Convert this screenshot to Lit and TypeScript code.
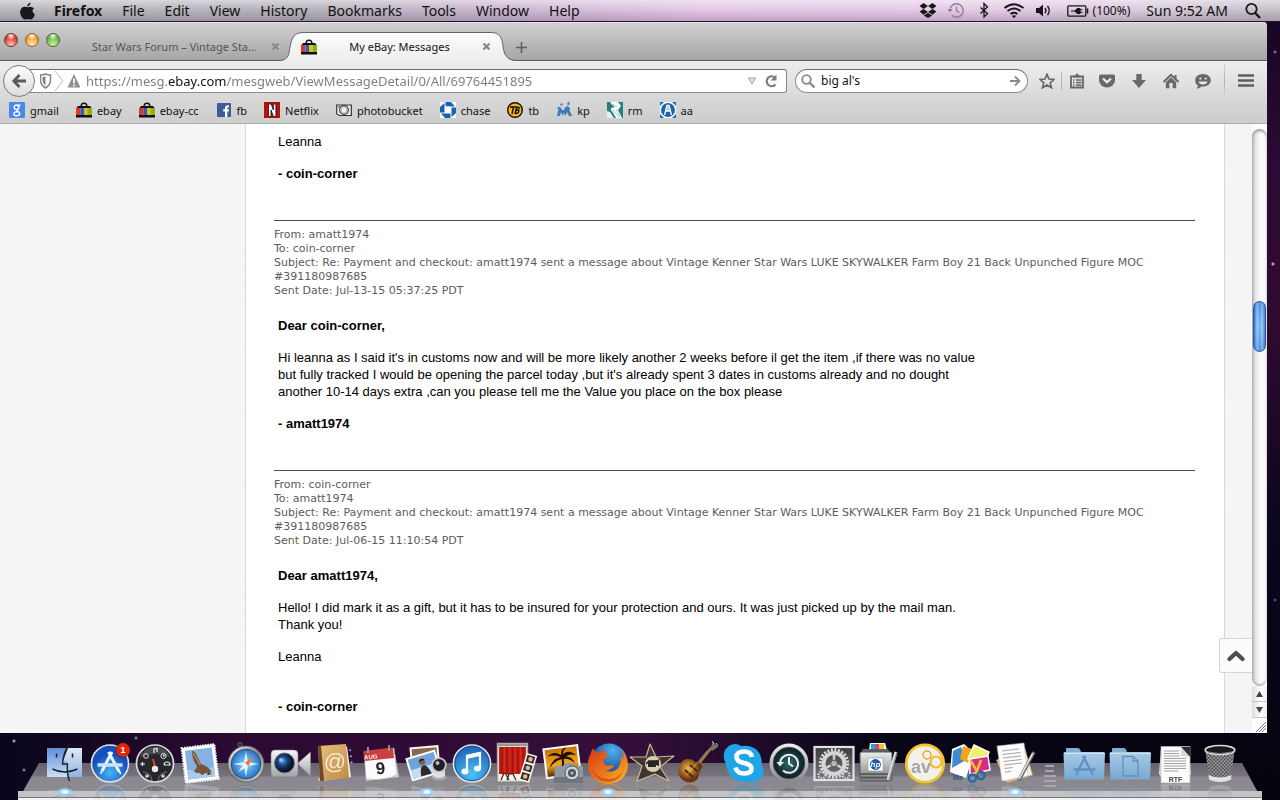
import { LitElement, html, css, svg, nothing } from "lit";
import { customElement, property, state } from "lit/decorators.js";
import { classMap } from "lit/directives/class-map.js";

/* ---------- small glyphs ---------- */

const bag = svg`<path d="M5 5C5 0 11 0 11 5" fill="none" stroke="#111" stroke-width="1.4"/>
  <path d="M2 4h12l1.500 2H.5z" fill="#111"/><path d="M0 6h4.500v7H0z" fill="#e2342a"/><path d="M4.500 6H8v7H4.500z" fill="#1b62d6"/>
  <path d="M8 6h3.500v7H8z" fill="#f3b50c"/><path d="M11.500 6H16v7h-4.500z" fill="#86b414"/><path d="M0 13h16v2.500H0z" fill="#111"/>`;

const favicons: Record<string, unknown> = {
  gmail: svg`<rect width="16" height="16" rx="1" fill="#4a87ee"/><circle cx="7.500" cy="5.300" r="2.300" fill="none" stroke="#fff" stroke-width="1.500"/>
    <path d="M9 3.200h2.500M8 7.700c-1.500 1 2.800 1.500 2.800 3.800 0 3-6 3-6 .4 0-1.800 2-2.300 4-2" fill="none" stroke="#fff" stroke-width="1.400"/>`,
  bag,
  fb: svg`<rect x="1" y="1" width="14" height="14" fill="#3f5c9a"/><path d="M9 15V9.500H7.200V7.300H9V5.800C9 3.800 10.200 3 13 3.200v2c-1.300 0-1.700.1-1.700 1v1.100H13l-.2 2.200h-1.500V15z" fill="#fff"/>`,
  netflix: svg`<rect width="16" height="16" fill="#b5120f"/><path d="M4.500 2h2.600l2.300 6V2h2.500v12.500H9.500L7 8v6.500H4.500z" fill="#fff" stroke="#111" stroke-width=".8"/>`,
  photo: svg`<path d="M.7 3h14.600v10.500H3.500L.7 12z" fill="#eee" stroke="#333" stroke-width="1.200"/><circle cx="8" cy="8" r="4.300" fill="#f6f6f6" stroke="#333" stroke-width="1.200"/><circle cx="8" cy="8" r="2.800" fill="none" stroke="#bbb"/><path d="M2 5h2" stroke="#333"/>`,
  chase: svg`<rect width="16" height="16" fill="#fff"/><path d="M5.500 0H11l4 4.500h-5.500v-.2L5.500 4.200zM16 5.500V11l-4.500 4v-9.500zM10.500 16H5l-4-4.500h9.500zM0 10.500V5l4.500-4v9.500z" fill="#1763b0"/>`,
  tb: svg`<circle cx="8" cy="8" r="7.300" fill="#f7b21c" stroke="#111" stroke-width="1.400"/><path d="M3 5h6M6.500 5 5 12M9.800 4.500 8 12M9 8.500c4-2 4 3-1 3M10 5.300c3-.5 3 2-.5 3" fill="none" stroke="#111" stroke-width="1.400"/>`,
  kp: svg`<path d="M1 14 2.500 7 1 6l1.500-1.500L5 6l1 2h2l1-2.500L11.500 4 14 6l-.5 2L16 14h-3l-2-4-1.500 4L8 11l-1.500 3L5 10l-1 4zM4.500 1.500h2v2h-2zM11.500 0h2v3h-2z" fill="#3f7cba"/>`,
  rm: svg`<rect width="16" height="16" fill="#24807b"/><path d="M3 0h8l3 4-3 4 4 8H9L5 9H4V6l4-1-3-2z" fill="#fff"/><path d="M6 8l6 7M9 7l4 8M5 2l5 3" stroke="#8fb8b5" stroke-width=".8"/><path d="M0 9l3 1 4 6H0z" fill="#e6eeee"/>`,
  aa: svg`<rect width="16" height="16" fill="#fff"/><path d="M0 0h4L0 4zM16 0h-4l4 4zM0 16h4l-4-4zM16 16h-4l4-4z" fill="#2a6fae"/><circle cx="8" cy="8" r="7" fill="#1d66ad"/><path d="M4.500 13 7 3.500h2L11.500 13M6 9h4M8 5v4" fill="none" stroke="#fff" stroke-width="1.300"/>`,
};

const tools: Record<string, unknown> = {
  star: svg`<path d="M8 1.200 10 6l5.200.4-4 3.400 1.300 5L8 12l-4.500 2.800 1.300-5-4-3.400L6 6z" fill="none" stroke="#666" stroke-width="1.600"/>`,
  list: svg`<path d="M2 3.500h12v11H2z" fill="none" stroke="#666" stroke-width="1.800"/><path d="M5 4.500V2.500h1.500L7 .8h2l.5 1.700H11v2z" fill="#666"/><path d="M4 7h1.500M7 7h5.500M4 9.500h1.500M7 9.500h5.500M4 12h1.500M7 12h5.500" stroke="#666" stroke-width="1.300"/>`,
  pocket: svg`<path d="M1.500 1.500h13q1.500 0 1.500 1.500v4a8 7.500 0 0 1-16 0V3q0-1.500 1.500-1.500z" fill="#696969"/><path d="M4 5.500 8 9.300l4-3.800" fill="none" stroke="#eee" stroke-width="2.200"/>`,
  down: svg`<path d="M5.300 1h5.400v6H15l-7 8-7-8h4.300z" fill="#696969"/>`,
  home: svg`<path d="M.5 9 8 1.800 15.500 9" fill="none" stroke="#666" stroke-width="2"/><path d="M11.500 2h2v4l-2-2zM2.800 9.200 8 4.300l5.200 4.900v6H9.700V10H6.300v5.200H2.800z" fill="#696969"/>`,
  chat: svg`<path d="M8 1c4.500 0 7.800 2.800 7.800 6.300S12.500 13.600 8 13.600l-1.500-.1C5 15 3 15.600 1.500 15.500c1-.8 1.400-1.800 1.300-2.900C1 11.500.2 9.600.2 7.300.2 3.800 3.500 1 8 1z" fill="#696969"/><circle cx="5.300" cy="5.500" r="1.100" fill="#eee"/><circle cx="10.700" cy="5.500" r="1.100" fill="#eee"/><path d="M3.500 8.500h9q-1 3-4.500 3t-4.500-3z" fill="#e6e6e6"/>`,
  menu: svg`<path d="M0 2.500h16M0 7.500h16M0 12.500h16" stroke="#5e5e5e" stroke-width="2.600"/>`,
};

const menuGlyphs: Record<string, unknown> = {
  dropbox: svg`<path d="M4.500 1 9 4 4.500 7 .5 4zM13.500 1 9 4l4.500 3 4-3zM.5 9.500 4.500 7 9 10l-4.500 2.800zM17.500 9.500 13.500 7 9 10l4.500 2.800zM4.800 13.600 9 11l4.200 2.600L9 16z" fill="#1b141d"/>`,
  time: svg`<path d="M3.200 6.200a6.700 6.700 0 1 1 1.600 7.100" fill="none" stroke="#8c7d90" stroke-width="1.400"/><path d="M9.500 4.500v4.300l3 1.700" fill="none" stroke="#8c7d90" stroke-width="1.300"/><path d="M.5 7h5.200L2.800 10.500z" fill="#8c7d90"/>`,
  bt: svg`<path d="m5.500 5.500 7 6-3.500 3.500V1.500L12.500 5l-7 6.500" fill="none" stroke="#1b141d" stroke-width="1.300"/>`,
  vol: svg`<path d="M1 6h3l4-3.500v12L4 11H1z" fill="#1b141d"/><path d="M10 6q1.800 2.500 0 5M12.500 4q3.500 4.500 0 9" fill="none" stroke="#1b141d" stroke-width="1.400"/>`,
  search: svg`<circle cx="7.500" cy="7" r="5.200" fill="none" stroke="#1b141d" stroke-width="1.800"/><path d="m11.300 11 4.700 5" stroke="#1b141d" stroke-width="2.400"/>`,
};

/* ---------- dock icons, drawn on a 40 × 40 grid ---------- */

interface DockItem { name: string; art: unknown; running?: boolean; badge?: string }

const folder = (mark: unknown) => svg`
  <defs><linearGradient id="fold" x2="0" y2="1"><stop stop-color="#a9cbe6"/><stop offset="1" stop-color="#78a9d2"/></linearGradient></defs>
  <path d="M2 9V6q0-1 1-1h11q1 0 2 1.500L17 9h23l-1 3H1z" fill="#82aed1"/><path d="M-.5 10.500q0-1.500 1.500-1.500h38.500q1.500 0 1.500 1.500L40 36.500H.5z" fill="url(#fold)"/>
  <path d="M0 10.500h41" stroke="#cfe3f3"/>${mark}`;

const dock: DockItem[] = [
  { name: "Finder", running: true, art: svg`
    <defs><linearGradient id="fl" x2="0" y2="1"><stop stop-color="#5f8fd8"/><stop offset="1" stop-color="#c9dff5"/></linearGradient>
    <linearGradient id="fr" x2="0" y2="1"><stop stop-color="#dfe9f5"/><stop offset="1" stop-color="#8fb4df"/></linearGradient></defs>
    <path d="M2 5h20l-4 12h4v17H2z" fill="url(#fl)"/><path d="M23 5h14v29H22V18h-4z" fill="url(#fr)"/>
    <path d="M24.500 1Q18 10 17.500 21h5q-1 9 2 17M7.500 26q12 6 25 0" fill="none" stroke="#15202e" stroke-width="1.400"/><path d="M11.500 10.500v4M27.500 10.500v4" stroke="#15202e" stroke-width="1.500"/>` },
  { name: "App Store", badge: "1", art: svg`
    <defs><radialGradient id="as" cy=".75"><stop stop-color="#46b4f4"/><stop offset="1" stop-color="#1450bd"/></radialGradient></defs>
    <circle cx="20" cy="20.500" r="18.500" fill="url(#as)" stroke="#dfe3e8" stroke-width="1.600"/>
    <path d="M22 9 12 28M18.500 9 29 28.500" stroke="#eef4fb" stroke-width="3"/><path d="M7.500 22h25" stroke="#cfe2f5" stroke-width="3.500"/><path d="m12 28-1.500 3M29 28l1.800 3" stroke="#fff" stroke-width="1.600"/>` },
  { name: "Dashboard", art: svg`
    <circle cx="20" cy="20.500" r="18.500" fill="#26272a" stroke="#d8d8dc" stroke-width="1.700"/><path d="M5 14a16 16 0 0 1 30 0q-15-6-30 0z" fill="#4a4b50"/>
    <path d="M8 29a9 9 0 0 1 9 9M32 29a9 9 0 0 0-9 9" fill="none" stroke="#77787c"/><circle cx="11" cy="13" r="2.300" fill="none" stroke="#ddd"/><circle cx="28.500" cy="13" r="2.600" fill="none" stroke="#ddd"/>
    <path d="M19 10V6l3-.6V9M5 21h5M7.500 19v4M29 22h6q0-3-3-3t-3 3M28.500 11.500V13h1.500" fill="none" stroke="#eee" stroke-width="1.200"/><path d="m18 16 2.500 10" stroke="#f0442f" stroke-width="1.800"/>
    <circle cx="20" cy="26" r="3.200" fill="#ececec"/><circle cx="12" cy="33" r="1.800" fill="#ddd"/><circle cx="28" cy="33" r="1.800" fill="#ddd"/><path d="m10 31 2 2M30 31l-2 2" stroke="#e44"/>` },
  { name: "Mail", art: svg`
    <g transform="rotate(-7 20 20)"><rect x="3.500" y="3" width="33" height="35" fill="#fff" stroke="#fff" stroke-width="2" stroke-dasharray="1.600 1"/><rect x="6.500" y="6" width="27" height="29" fill="#86b2e2"/><path d="M6.500 25q12 5 27 0v10h-27z" fill="#a9caec"/></g>
    <path d="M12 8q3 0 5 5l4 8q7 2 11 8l-6 1-4 2q-3-3-6-2l-2-2q3-3 3-5-5-6-5-15z" fill="#7a553a"/><path d="M13 10q4 6 7 12" stroke="#c8a683" fill="none"/><path d="m28 29 4 2-5 1z" fill="#433"/>` },
  { name: "Safari", art: svg`
    <defs><radialGradient id="sf"><stop stop-color="#8fd8fa"/><stop offset="1" stop-color="#2473c9"/></radialGradient><linearGradient id="sm" x2="1" y2="1"><stop stop-color="#fff"/><stop offset=".5" stop-color="#80858c"/><stop offset="1" stop-color="#d8dadd"/></linearGradient></defs>
    <circle cx="14" cy="1.500" r="2" fill="none" stroke="#777"/><circle cx="20" cy="21" r="18" fill="url(#sm)" stroke="#50545a" stroke-width=".8"/><circle cx="20" cy="21" r="14.800" fill="url(#sf)" stroke="#394b5e"/>
    <path d="m20 8 2 11 11 2-11 2-2 11-2-11-11-2 11-2z" fill="#d8f1fc"/><path d="m28 13-6 10-3-3z" fill="#e5482d"/><path d="m28 13-8.500 7.500L22 23z" fill="#f37a4c"/><path d="m12 29 7-9 3 3z" fill="#f5f8fa"/>` },
  { name: "FaceTime", art: svg`
    <defs><linearGradient id="ft" x2="0" y2="1"><stop stop-color="#f6f6f6"/><stop offset="1" stop-color="#a2a3a6"/></linearGradient><radialGradient id="fe" cx=".4" cy=".4"><stop stop-color="#5fa2e0"/><stop offset=".5" stop-color="#17407c"/><stop offset="1" stop-color="#0a1224"/></radialGradient></defs>
    <path d="M27 20 39.500 9v24L27 21z" fill="url(#ft)" stroke="#8d8e91" stroke-width=".5"/><rect x="0" y="7" width="27" height="27" rx="4" fill="url(#ft)" stroke="#818286" stroke-width=".6"/><circle cx="13.500" cy="20" r="10" fill="url(#fe)" stroke="#74777c"/><circle cx="10" cy="17" r="2" fill="#b8d8f5" opacity=".7"/>` },
  { name: "Address Book", art: svg`
    <defs><linearGradient id="ab" x2="1" y2="1"><stop stop-color="#e9c07c"/><stop offset="1" stop-color="#bd8943"/></linearGradient></defs>
    <path d="m31 3 4 31-30 4-3-1z" fill="#f2eee6"/><path d="M33 7l2 .5M34 13l2 .5M34.500 19l2 .5" stroke="#8cb3d8" stroke-width="1.600"/><path d="M2 3 30 1l3 34-29 3z" fill="url(#ab)"/><path d="m2 3 3-.3L8 37.700 4 38z" fill="#6b4a2c"/>
    <text x="19" y="26" text-anchor="middle" font-family="Liberation Sans, sans-serif" font-size="22" fill="#f6ead3">@</text>` },
  { name: "Calendar", art: svg`
    <path d="m6 14 28-3 4 23-33 4z" fill="#cfcfcf"/><path d="m3 9 30-4 3 27q-15 6-31 4z" fill="#fbfbfb" stroke="#aaa" stroke-width=".5"/><path d="m2.500 8 29.500-3.500 1 10.500L3.500 18z" fill="#c83f3c"/><path d="M7 4v6M28 2v6" stroke="#9a9a9a" stroke-width="1.800"/>
    <text x="10" y="16" text-anchor="middle" font-family="Liberation Sans, sans-serif" font-size="6" font-weight="bold" fill="#fff" transform="rotate(-5 10 16)">AUG</text>
    <text x="20" y="31" text-anchor="middle" font-family="Liberation Sans, sans-serif" font-size="17" font-weight="bold" fill="#222" transform="rotate(-5 20 31)">9</text>` },
  { name: "iPhoto", running: true, art: svg`
    <g transform="rotate(-5 20 10)"><rect x="3" y="3" width="29" height="20" fill="#fafafa"/><rect x="5" y="5" width="25" height="16" fill="#8a6a4a"/></g>
    <g transform="rotate(-17 18 22)"><rect x="1" y="10" width="31" height="24" fill="#fff"/><rect x="3" y="12" width="27" height="20" fill="#6ea3dc"/><path d="M3 23h27v9H3z" fill="#c7dcef"/><path d="M11 32q1-9 5-10t6 10z" fill="#2b2b2b"/><circle cx="16" cy="18" r="3.200" fill="#8a5b3b"/><path d="M12.800 17q3-4 6.400 0z" fill="#1c1514"/></g>
    <ellipse cx="32" cy="34" rx="7.500" ry="3.500" fill="#a9a9ad"/><path d="M26 27q6 5 12 0v6q-6 4-12 0z" fill="#dedfe1"/><circle cx="32" cy="22" r="6.800" fill="#1d1f22" stroke="#c5c7ca" stroke-width="1.800"/><circle cx="30.500" cy="20" r="2" fill="#b8bcc2"/>` },
  { name: "iTunes", art: svg`
    <defs><radialGradient id="it" cy=".8" r=".8"><stop stop-color="#4ec2f5"/><stop offset="1" stop-color="#1b5fb5"/></radialGradient></defs>
    <circle cx="20" cy="20.500" r="18.500" fill="url(#it)" stroke="#dfe5ea" stroke-width="1.700"/><circle cx="20" cy="20.500" r="17.200" fill="none" stroke="#123f7c" stroke-width=".8"/>
    <path d="M15 29V13l13-3v15.500" fill="none" stroke="#f5f9fc" stroke-width="2.200"/><path d="m14.500 12 14-3v4l-14 3z" fill="#f5f9fc"/><ellipse cx="13" cy="28.500" rx="3.600" ry="2.900" fill="#f5f9fc"/><ellipse cx="25.500" cy="25.500" rx="3.600" ry="2.900" fill="#f5f9fc"/>` },
  { name: "Photo Booth", art: svg`
    <defs><linearGradient id="pb" x2=".2" spreadMethod="repeat"><stop stop-color="#dd2a1c"/><stop offset=".5" stop-color="#a0120b"/><stop offset="1" stop-color="#dd2a1c"/></linearGradient></defs>
    <rect x="0" y="0" width="31" height="39" fill="#d8d8d6" stroke="#75716e" stroke-width=".8"/><rect x="2" y="4" width="27" height="27" fill="url(#pb)"/><path d="M1 2h29" stroke="#555"/><path d="M2 31h27v6H2z" fill="#f4f2ef"/><path d="m4 37 3-7M12 37l-4-7M10 31h6l3 6M10 37l2-6" stroke="#3b2018" stroke-width="1.200" fill="none"/>
    <g transform="rotate(17 31 26)"><rect x="25" y="11" width="11" height="28" fill="#f7f7f7"/><path d="M26.500 12.500h8v7h-8zM26.500 21.500h8v7h-8zM26.500 30.500h8v7h-8z" fill="#3a2a22"/><circle cx="30.500" cy="16" r="2.300" fill="#e1b595"/><circle cx="30.500" cy="25" r="2.300" fill="#e1b595"/><circle cx="30.500" cy="34" r="2.300" fill="#e1b595"/></g>` },
  { name: "Image Capture", art: svg`
    <defs><linearGradient id="ic" x2="0" y2="1"><stop stop-color="#c9720b"/><stop offset=".6" stop-color="#f2a51c"/><stop offset="1" stop-color="#5a2a08"/></linearGradient></defs>
    <g transform="rotate(-7 20 18)"><rect x="1" y="3" width="36" height="31" fill="#fdfdfd"/><rect x="3" y="5" width="32" height="27" fill="url(#ic)"/><path d="M19 12Q12 6 5 12q8-2 13 2-8 0-12 9 7-7 13-7 0 8-4 16h3q3-8 3-16 6 0 11 6-3-8-9-8 5-3 11 0-6-7-13-3 0-4 4-6-6 0-6 7z" fill="#1f1108"/></g>
    <path d="M12 23h8l2-3h7l2 3h9v17H11z" fill="#8f979f"/><path d="M11 34h29v6H11z" fill="#6f767d"/><circle cx="29" cy="30" r="7" fill="#cfd4d9" stroke="#555b61"/><circle cx="29" cy="30" r="4" fill="#4b5560"/><circle cx="29" cy="30" r="1.600" fill="#a7bfd8"/>` },
  { name: "Firefox", running: true, art: svg`
    <defs><radialGradient id="ff" cx=".6" cy=".2" r=".7"><stop stop-color="#4fb2ee"/><stop offset="1" stop-color="#123a86"/></radialGradient><linearGradient id="fx" x2="1" y2="1"><stop stop-color="#d9380f"/><stop offset=".6" stop-color="#ee7d1c"/><stop offset="1" stop-color="#fbc62a"/></linearGradient></defs>
    <circle cx="21" cy="19" r="18.500" fill="url(#ff)"/><path d="M3 9 5 5q2 5 6 5l5-4q0 4 4 6 0 3-5 4l1 5q3 3 7 1l3 1q-4 5-9 4 7 4 13-2 4-5 2-13l3 4q1-7-3-11 8 7 8 17a20 19 0 0 1-40 0q0-8 3-12z" fill="url(#fx)"/><path d="M4 25q5 12 18 11 11-1 15-12-5 15-17 15Q7 38 4 25z" fill="#c93b0d" opacity=".6"/>` },
  { name: "iMovie", art: svg`
    <path d="M17 1 23 14l18-1-14 11 9 14-14-7L4 38l5-15-12-9 16 0z" fill="#3b3633" stroke="#cdb795" stroke-width="1.200" stroke-linejoin="round"/><circle cx="20" cy="21" r="8" fill="#d8cfae"/><path d="M15 18h8l3-2v7l-3-1v2h-8z" fill="#2b2724"/><path d="m13 21 3-3h8" stroke="#222" stroke-width="1.500" fill="none"/>` },
  { name: "GarageBand", art: svg`
    <defs><radialGradient id="gb" cx=".4" cy=".4"><stop stop-color="#f0b54a"/><stop offset="1" stop-color="#6b3209"/></radialGradient></defs>
    <path d="m20 22 13-17" stroke="#a07a45" stroke-width="2.600"/><path d="m32 6 3-7 5 5-6 4z" fill="#77716a"/><path d="m34-2 2 3M38 0l2 3" stroke="#ccc"/><path d="M2 22q2-6 8-6 5 0 7 3l5 1q4 3 1 6l-2 4q0 7-6 9-8 2-13-5-3-6 0-12z" fill="url(#gb)"/><path d="m7 27 8 7M12 22l7 6" stroke="#3d2410" stroke-width="1.800"/><path d="m9 32 20-24" stroke="#f5e7c8" stroke-width=".5"/>` },
  { name: "Skype", art: svg`
    <path d="M11 1q4 0 6 2 21-2 21 20 3 5 1 10-5 8-14 6Q5 41 2 21-2 14 1 7 5 1 11 1z" fill="#1fa5e6"/>
    <path d="M28 14q-1-5.500-8-5.500-7.500 0-7.500 5.500 0 4.500 7.500 6t7.500 5.500q0 5-7.500 5-7 0-8.500-6" fill="none" stroke="#fff" stroke-width="4.600"/>` },
  { name: "Time Machine", art: svg`
    <defs><radialGradient id="tm"><stop stop-color="#2e6d6e"/><stop offset="1" stop-color="#0b1b22"/></radialGradient><linearGradient id="tr" x2="0" y2="1"><stop stop-color="#f0f0f0"/><stop offset="1" stop-color="#85878a"/></linearGradient></defs>
    <circle cx="20" cy="20" r="19.500" fill="url(#tr)"/><circle cx="20" cy="20" r="15.800" fill="url(#tm)" stroke="#4f5255"/><path d="M11 21a9 9 0 1 1 3 6.500M20 14v6.500l4 3" fill="none" stroke="#e9eded" stroke-width="2"/><path d="M7.500 19h7.500l-4 4.500z" fill="#e9eded"/>` },
  { name: "System Preferences", art: svg`
    <defs><linearGradient id="sp" x2="0" y2="1"><stop stop-color="#3b3c3e"/><stop offset="1" stop-color="#77797b"/></linearGradient></defs>
    <rect x=".5" y="4" width="39" height="33" fill="url(#sp)" stroke="#e1e2e3" stroke-width="2.200"/><circle cx="20" cy="20.500" r="13.700" fill="none" stroke="#dedfe0" stroke-width="3" stroke-dasharray="2 1.585"/><circle cx="20" cy="20.500" r="10.500" fill="none" stroke="#d5d6d7" stroke-width="4"/><path d="M20 20.500V10M20 20.500l-9 5M20 20.500l9 5" stroke="#cfd0d1" stroke-width="2.500"/><circle cx="20" cy="20.500" r="3.400" fill="#b6b7b8" stroke="#555"/><circle cx="8" cy="32" r="3.500" fill="none" stroke="#ccc" stroke-width="2.500" stroke-dasharray="1.600 1.100"/><circle cx="32" cy="32" r="3.500" fill="none" stroke="#ccc" stroke-width="2.500" stroke-dasharray="1.600 1.100"/>` },
  { name: "HP Utility", art: svg`
    <defs><linearGradient id="hp" x2="0" y2="1"><stop stop-color="#eceded"/><stop offset="1" stop-color="#77797c"/></linearGradient></defs>
    <path d="M11 0h15l2 7H10z" fill="#fff"/><path d="M12 1h4v5h-4z" fill="#22a7dd"/><path d="M16 1h4v5h-4z" fill="#e03a8c"/><path d="M20 1h5v5h-5z" fill="#f2c61e"/><path d="M4 6h25l3 6H1z" fill="#5d5f62"/><rect x="1" y="9" width="32" height="29" rx="1.500" fill="url(#hp)" stroke="#55575a"/><path d="M1 31h32M2 34.500h30" stroke="#4d4f52" stroke-width="1.500"/>
    <rect x="9" y="15" width="15" height="13" fill="#fff" stroke="#888" stroke-width=".5"/><circle cx="16.500" cy="21.500" r="5.400" fill="#1b5ea8"/><text x="16.500" y="24" text-anchor="middle" font-family="Liberation Sans, sans-serif" font-size="8" font-style="italic" font-weight="bold" fill="#fff">hp</text><path d="m37 9-8 28" stroke="#dfe0e2" stroke-width="3"/><path d="m38 9-8 28" stroke="#77797b"/>` },
  { name: "Avast", art: svg`
    <circle cx="20" cy="20.500" r="18.700" fill="#f3f1ec" stroke="#f4c42d" stroke-width="2.800"/><circle cx="22" cy="12" r="4" fill="none" stroke="#e9a72a" stroke-width="1.500"/><circle cx="31" cy="19" r="5.500" fill="none" stroke="#f0bb3c" stroke-width="2.200"/><path d="m25 14 2 2" stroke="#e9a72a"/>
    <text x="16" y="30" text-anchor="middle" font-family="Liberation Sans, sans-serif" font-size="18" font-weight="bold" fill="#a5a5a7">av</text>` },
  { name: "Photo Editor", art: svg`
    <path d="m2 6 12-5 10 9-8 25L0 29z" fill="#fff"/><path d="m3 8 8-4 5 13-14 8z" fill="#3f8bd3"/><path d="M13 3l9 3-4 14-8-4z" fill="#f5a31a"/><path d="m24 2 15 7-6 14-15-7z" fill="#eef06c" stroke="#fff" stroke-width="1.500"/><path d="m20 16 18-3 2 14-20 4z" fill="#dc2a8c" stroke="#fff" stroke-width="1.500"/>
    <path d="m21 18 8 14M31 17 25 33" stroke="#f0c21d" stroke-width="2.600"/><circle cx="22.500" cy="35" r="3.700" fill="none" stroke="#1f66b5" stroke-width="2.200"/><circle cx="31" cy="32.500" r="3.700" fill="none" stroke="#1f66b5" stroke-width="2.200"/>
    <text x="3" y="37" font-family="Liberation Sans, sans-serif" font-size="7" font-weight="bold" fill="#1d4c94">lite</text>` },
  { name: "TextEdit", running: true, art: svg`
    <path d="M1 17 30 5l8 27-26 8z" fill="#dcae5f"/><path d="M4 14 28 1l9 31-27 6z" fill="#efefef"/><path d="M2 3 29 0l4 33-26 5z" fill="#fcfcfc" stroke="#bbb" stroke-width=".6"/><path d="m7 8 17-2M7.500 11.500l18-2M8 15l18-2M8.500 18.500l18-2M9 22l18-2M9.500 25.500l8-1M10 29l6-.6" stroke="#999" stroke-width=".9"/><path d="M39 9 24 37" stroke="#5c5e60" stroke-width="3.600"/><path d="M38 10 24 36" stroke="#d5d6d8" stroke-width="2"/>` },
];

const dockRight: DockItem[] = [
  { name: "Applications", art: folder(svg`<path d="M21.500 13 12 32M19 13l10 19M9.500 26.500h22" fill="none" stroke="#5f93c2" stroke-width="2.300"/>`) },
  { name: "Documents", art: folder(svg`<path d="M13 13.500h10l5 4.500v15H13zM23 13.500V18h5" fill="none" stroke="#5f93c2" stroke-width="1.300"/>`) },
  { name: "Rich text file", art: svg`
    <path d="M6 5 34 7l2 24-4 6H8L4 31z" fill="#dedede"/><path d="M6 3.500h29V40H6z" fill="#fbfbfb" stroke="#bbb" stroke-width=".7"/><path d="M9 8h15M9 10.500h15M9 13h16M9 15.500h22M9 18h22M9 20.500h22M9 23h22M9 25.500h22M9 28h14" stroke="#9a9a9a" stroke-width=".9"/><path d="M26 4h9v10z" fill="#2f2f2f"/><path d="M26 4v9l9 1z" fill="#d8d8d8"/>
    <text x="20.500" y="38.500" text-anchor="middle" font-family="Liberation Sans, sans-serif" font-size="7" font-weight="bold" fill="#444">RTF</text>` },
  { name: "Trash", art: svg`
    <defs><pattern id="mesh" width="2.500" height="2.500" patternUnits="userSpaceOnUse" patternTransform="rotate(45)"><rect width="2.500" height="2.500" fill="#4e4f52"/><path d="M0 0h2.500M0 0v2.500" stroke="#c9cacc" stroke-width=".9"/></pattern></defs>
    <path d="M5.500 8h29l-3.500 28q-11 5-22 0z" fill="url(#mesh)"/><path d="M8.500 32q11 5 23 0l-.5 4.500q-11 5-22 0z" fill="#e3e4e6"/><ellipse cx="20" cy="7" rx="14.800" ry="4.500" fill="#1a1a1d" stroke="#d9dadc" stroke-width="1.700"/><path d="M8 9q12 3 24 0" stroke="#77787a" fill="none"/>` },
];

/* ---------- mail data ---------- */

interface Message { from?: string; to?: string; date?: string; dear?: string; body: string[][]; sign: string; loose?: boolean }

const SUBJECT = "Re: Payment and checkout: amatt1974 sent a message about Vintage Kenner Star Wars LUKE SKYWALKER Farm Boy 21 Back Unpunched Figure MOC #391180987685";

const messages: Message[] = [
  { body: [["Leanna"]], sign: "coin-corner" },
  { from: "amatt1974", to: "coin-corner", date: "Jul-13-15 05:37:25 PDT", dear: "coin-corner", sign: "amatt1974",
    body: [["Hi leanna as I said it's in customs now and will be more likely another 2 weeks before il get the item ,if there was no value",
      "but fully tracked I would be opening the parcel today ,but it's already spent 3 dates in customs already and no dought",
      "another 10-14 days extra ,can you please tell me the Value you place on the box please"]] },
  { from: "coin-corner", to: "amatt1974", date: "Jul-06-15 11:10:54 PDT", dear: "amatt1974", sign: "coin-corner", loose: true,
    body: [["Hello! I did mark it as a gift, but it has to be insured for your protection and ours. It was just picked up by the mail man.", "Thank you!"], ["Leanna"]] },
];

/* ---------- elements ---------- */

@customElement("menu-bar")
class MenuBar extends LitElement {
  static styles = css`
    :host { display: flex; align-items: center; height: 22px; box-sizing: border-box; border-bottom: 1px solid #2a1130; padding: 0 18px 0 19px; color: #111;
      font: 14px "Noto Sans", sans-serif;
      background: linear-gradient(rgba(255,255,255,.45), rgba(255,255,255,0) 45%, rgba(40,20,50,.2)), linear-gradient(90deg, #b9b9bd, #b6b3bc 24%, #cdb8d2 40%, #e6c8e8 55%, #e4cce6 78%, #d8cbdb 90%, #c5c0c9); }
    nav { display: flex; gap: 20px; flex: 1; align-items: center; }
    button { all: unset; cursor: default; line-height: 20px; white-space: nowrap; }
    .apple { margin-right: -2px; }
    .app { font-weight: bold; }
    svg { display: block; }
    .extras { display: flex; align-items: center; gap: 10px; }
    .battery { display: flex; align-items: center; gap: 4px; font-size: 12px; margin-left: 4px; }
    .clock { margin: 0 6px; }
  `;
  glyph(k: string) {
    return html`<button aria-label=${k}><svg width="18" height="17" viewBox="0 0 18 17">${menuGlyphs[k]}</svg></button>`;
  }
  render() {
    return html`
      <nav>
        <button class="apple" aria-label="Apple menu"><svg width="17" height="18" viewBox="0 0 17 18"><path d="M11.500.5q0 3-3.300 4Q8 1.800 11.500.5zM8.700 5.300q3.300-1.700 6.300.9-3.500 2.700.9 6-1.700 5.300-4.500 5.300-1.200-.6-2.600-.6t-2.500.6C3.500 17.500.6 12.500 1.200 9q1-4.500 5-4.300z" fill="#18171a"/></svg></button>
        <button class="app">Firefox</button>
        ${["File", "Edit", "View", "History", "Bookmarks", "Tools", "Window", "Help"].map((m) => html`<button>${m}</button>`)}
      </nav>
      <div class="extras">
        ${["dropbox", "time", "bt"].map((k) => this.glyph(k))}
        <button aria-label="Wi-Fi"><svg width="22" height="17" viewBox="0 0 22 17"><path d="M1.500 6q9.500-7.500 19 0M4.500 9q6.500-5 13 0M7.500 12q3.500-2.500 7 0" fill="none" stroke="#1b141d" stroke-width="1.900"/><path d="m8.800 13.800 2.200 2.400 2.200-2.400q-2.200-1.300-4.400 0z" fill="#1b141d"/></svg></button>
        ${this.glyph("vol")}
        <button class="battery"><svg width="22" height="12" viewBox="0 0 22 12"><rect x=".8" y=".8" width="18" height="10.400" rx="1" fill="none" stroke="#1b141d" stroke-width="1.300"/><path d="M20.500 3.500v5" stroke="#1b141d" stroke-width="1.600"/><path d="M4 6h4M8 6q1-3 5-2.700v5.400Q9 9 8 6zM13 4.700h2.500M13 7.300h2.500" stroke="#1b141d" fill="#1b141d"/></svg>(100%)</button>
        <button class="clock">Sun 9:52 AM</button>
        ${this.glyph("search")}
      </div>`;
  }
}

@customElement("browser-chrome")
class BrowserChrome extends LitElement {
  @state() query = "big al's";
  static styles = css`
    :host { display: block; font: 11px "Noto Sans", sans-serif; color: #111; }
    button { all: unset; box-sizing: border-box; cursor: default; }
    svg { display: block; flex: none; }
    .tabs { display: flex; align-items: flex-end; height: 39px; box-sizing: border-box; border-radius: 0 4px 0 0; background: linear-gradient(#d2d2d2, #a4a4a4); box-shadow: inset 0 1px #e4e4e4, inset 0 -1px #5c5c5c; }
    .lights { display: flex; gap: 7px; align-self: flex-start; padding: 11px 0 0 4px; }
    .light { width: 14px; height: 14px; border-radius: 50%; border: 1px solid #6b3a35; background: radial-gradient(circle at 50% 15%, #fff 0, rgba(255,255,255,0) 35%), radial-gradient(circle at 50% 90%, #ffc4bd, #d6372c 65%); }
    .light.min { border-color: #8a5a28; background: radial-gradient(circle at 50% 15%, #fff 0, rgba(255,255,255,0) 35%), radial-gradient(circle at 50% 90%, #ffef9c, #ec9430 70%); }
    .light.max { border-color: #48693a; background: radial-gradient(circle at 50% 15%, #fff 0, rgba(255,255,255,0) 35%), radial-gradient(circle at 50% 90%, #cdf59c, #67ab48 70%); }
    .tab { display: flex; align-items: center; height: 29px; position: relative; }
    .tab.idle { padding-left: 32px; width: 220px; box-sizing: border-box; color: #555; }
    .tab.idle .title { flex: 1; }
    .tab.on { width: 236px; box-sizing: border-box; padding: 0 25px 0 21px; }
    .tab.on .title { flex: 1; text-align: center; }
    .shape { position: absolute; inset: 0; }
    .tab > button, .fav { position: relative; }
    .plus { padding: 0 0 8px; }
    .bar { background: linear-gradient(#eeeeee, #d6d6d6 65%, #cdcdcd); border-bottom: 1px solid #a9a9a9; padding-bottom: 4px; }
    .nav { display: flex; align-items: center; height: 40px; padding-left: 3px; }
    .back { width: 32px; height: 32px; border-radius: 50%; border: 1px solid #7b7b7b; background: linear-gradient(#fdfdfd, #dcdcdc); display: grid; place-items: center; margin-right: -16px; position: relative; }
    .url, .find { display: flex; align-items: center; height: 24px; box-sizing: border-box; border: 1px solid #8a8a8a; border-top-color: #6a6a6a; background: #fff; }
    .url { flex: 1; border-radius: 0 3px 3px 0; padding: 0 6px 0 20px; margin-right: 8px; gap: 6px; }
    .find { width: 233px; border-radius: 12px; padding: 0 6px 0 5px; gap: 6px; margin-right: 4px; }
    input { all: unset; flex: 1; min-width: 0; font-size: 12px; line-height: 20px; }
    .address { -webkit-text-fill-color: transparent; background: linear-gradient(90deg, #7c7c7c 81px, #111 81px, #111 140px, #7c7c7c 140px) no-repeat; -webkit-background-clip: text; background-clip: text; font-size: 13px; }
    .tool { display: grid; place-items: center; width: 32px; height: 32px; }
    .tool.star, .tool.list { width: 29px; }
    .tool.menu { width: 42px; }
    .sep { width: 1px; height: 18px; background: #b5b5b5; }
    .sep.tall { height: 36px; margin-left: 5px; background: linear-gradient(#dadada, #9fb0bf, #dadada); }
    .marks { display: flex; gap: 17px; padding-left: 9px; height: 18px; align-items: center; }
    a { display: flex; align-items: center; gap: 5px; color: inherit; text-decoration: none; white-space: nowrap; }
  `;
  close() {
    return html`<button aria-label="Close tab"><svg width="9" height="9" viewBox="0 0 9 9"><path d="m1.500 1.500 6 6m0-6-6 6" stroke="#888" stroke-width="2.200"/></svg></button>`;
  }
  render() {
    const marks: [string, string][] = [["gmail", "gmail"], ["bag", "ebay"], ["bag", "ebay-cc"], ["fb", "fb"], ["netflix", "Netflix"], ["photo", "photobucket"], ["chase", "chase"], ["tb", "tb"], ["kp", "kp"], ["rm", "rm"], ["aa", "aa"]];
    return html`
      <div class="tabs">
        <div class="lights">
          <button class="light" aria-label="Close"></button><button class="light min" aria-label="Minimize"></button><button class="light max" aria-label="Zoom"></button>
        </div>
        <div class="tab idle"><button class="title">Star Wars Forum – Vintage Sta...</button>${this.close()}</div>
        <div class="tab on">
          <svg class="shape" width="236" height="29" viewBox="0 0 236 29">
            <defs><linearGradient id="t" x2="0" y2="1"><stop stop-color="#fbfbfb"/><stop offset="1" stop-color="#eeeeee"/></linearGradient></defs>
            <path d="M0 29C9 28 9 21 10 15 12 5 14 .5 24 .5H211C220 .5 222 6 223 14 224 22 226 28 236 29z" fill="url(#t)"/>
            <path d="M0 28.500C9 28 9 21 10 15 12 5 14 .5 24 .5H211C220 .5 222 6 223 14 224 22 226 28 236 28.500" fill="none" stroke="#666"/>
          </svg>
          <svg class="fav" width="16" height="16" viewBox="0 0 16 16">${bag}</svg>
          <button class="title">My eBay: Messages</button>${this.close()}
        </div>
        <button class="plus" aria-label="New tab"><svg width="11" height="11" viewBox="0 0 11 11"><path d="M5.500 0v11M0 5.500h11" stroke="#5e5e5e" stroke-width="1.600"/></svg></button>
      </div>
      <div class="bar">
        <div class="nav">
          <button class="back" aria-label="Back"><svg width="16" height="16" viewBox="0 0 16 16"><path d="M8.500 2 2.800 8l5.700 6M3 8h12" fill="none" stroke="#5b5b5b" stroke-width="2.800"/></svg></button>
          <div class="url">
            <svg width="40" height="22" viewBox="0 0 40 22"><path d="M6 5q3 0 5-1 2 1 5 1v5q0 5-5 8-5-3-5-8z" transform="translate(-5.500 0)" fill="none" stroke="#858585" stroke-width="1.500"/><path d="M5.500 6.500v9.500q-3-3-3-6V7z" fill="#858585"/><path d="m15 1 8 10-8 10" fill="none" stroke="#bbb"/><path d="m34 4 6.500 13.500h-13z" fill="#8f8f8f"/><path d="M34 8.500v5M34 14.500V16.500" stroke="#fff" stroke-width="1.600"/></svg>
            <input class="address" type="text" aria-label="Address" value="https://mesg.ebay.com/mesgweb/ViewMessageDetail/0/All/69764451895" />
            <button aria-label="History"><svg width="10" height="8" viewBox="0 0 10 8"><path d="M1 1h8L5 7z" fill="#ddd" stroke="#aaa"/></svg></button>
            <button aria-label="Reload"><svg width="17" height="16" viewBox="0 0 17 16"><path d="M12.500 11.500A5 5 0 1 1 12 4.500" fill="none" stroke="#7d7d7d" stroke-width="2.200"/><path d="M13.500 1.500v6h-6z" fill="#7d7d7d"/></svg></button>
          </div>
          <div class="find">
            <svg width="14" height="14" viewBox="0 0 14 14"><circle cx="5.500" cy="5.500" r="4.300" fill="none" stroke="#8a8a8a" stroke-width="1.800"/><path d="m8.500 8.500 5 5" stroke="#8a8a8a" stroke-width="2.400"/></svg>
            <input type="text" aria-label="Search" .value=${this.query} @input=${(e: InputEvent) => (this.query = (e.target as HTMLInputElement).value)} />
            <button aria-label="Go"><svg width="12" height="12" viewBox="0 0 12 12"><path d="M1 6h9M6 1.500 10.500 6 6 10.500" fill="none" stroke="#888" stroke-width="1.800"/></svg></button>
          </div>
          ${Object.keys(tools).map((k) => html`
            ${k === "list" ? html`<span class="sep"></span>` : nothing}${k === "menu" ? html`<span class="sep tall"></span>` : nothing}
            <button class="tool ${k}" aria-label=${k}><svg width="16" height="16" viewBox="0 0 16 16">${tools[k]}</svg></button>`)}
        </div>
        <nav class="marks">
          ${marks.map(([k, label]) => html`<a href="#"><svg width="16" height="16" viewBox="0 0 16 16">${favicons[k]}</svg>${label}</a>`)}
        </nav>
      </div>`;
  }
}

@customElement("message-thread")
class MessageThread extends LitElement {
  static styles = css`
    :host { display: flex; min-height: 0; position: relative; overflow: hidden; background: #f5f5f5 repeating-linear-gradient(45deg, #f6f6f6 0 2px, #f4f4f4 2px 4px); }
    .gutter { flex: 0 0 245px; }
    main { flex: 1; background: #fff; border: solid #d9d9d9; border-width: 0 1px; padding: 9px 29px 0 28px; font: 13px/17px "Liberation Sans", Arial, sans-serif; color: #000; overflow: hidden; }
    .edge { flex: 0 0 27px; }
    article + article { margin-top: 38px; border-top: 1px solid #4c4c4c; padding-top: 7px; }
    header { margin: 0 0 19px; font: 11px/14px "DejaVu Sans", Verdana, sans-serif; color: #5c5c5c; }
    .text { display: grid; gap: 15px; padding-left: 4px; }
    p { margin: 0; }
    .text p { white-space: nowrap; }
    .dear, .sign { font-weight: bold; }
    .loose .sign { padding-top: 18px; }
    .totop { all: unset; position: absolute; right: 0; bottom: 60px; width: 33px; height: 35px; box-sizing: border-box; border: 1px solid #d5d5d5; border-right: 0; border-radius: 3px 0 0 3px; background: #fcfcfc; display: grid; place-items: center; }
  `;
  render() {
    return html`
      <div class="gutter"></div>
      <main>
        ${messages.map((m) => html`
          <article class=${classMap({ loose: !!m.loose })}>
            ${m.from ? html`<header><p>From: ${m.from}</p><p>To: ${m.to}</p><p>Subject: ${SUBJECT}</p><p>Sent Date: ${m.date}</p></header>` : nothing}
            <div class="text">
              ${m.dear ? html`<p class="dear">Dear ${m.dear},</p>` : nothing}
              ${m.body.map((b) => html`<p>${b.map((line, i) => html`${i ? html`<br />` : nothing}${line}`)}</p>`)}
              <p class="sign">- ${m.sign}</p>
            </div>
          </article>`)}
      </main>
      <div class="edge"></div>
      <button class="totop" aria-label="Back to top"><svg width="18" height="13" viewBox="0 0 18 13"><path d="m2.500 10 6.500-6 6.500 6" fill="none" stroke="#4f4f4f" stroke-width="4.200" stroke-linecap="round" stroke-linejoin="round"/></svg></button>`;
  }
}

@customElement("scroll-rail")
class ScrollRail extends LitElement {
  static styles = css`
    :host { display: flex; flex-direction: column; background: #fdfdfd; }
    .track { flex: 1; display: grid; grid-template-rows: 172fr 51px 334fr; margin-top: 5px; border-radius: 8px; background: linear-gradient(90deg, #b9b9b9, #e6e6e6 25%, #fbfbfb 55%, #f8f8f8); box-shadow: inset 0 3px 3px -1px #999, inset 0 -2px 3px -1px #999; }
    .thumb { grid-row: 2; margin: 0 1px; border-radius: 7px; border: 1px solid #23549c; background: radial-gradient(ellipse at 50% 50%, rgba(255,255,255,.15), rgba(10,80,190,.35) 100%), linear-gradient(90deg, #2f7fe0, #a8d4f8 30%, #5a9fe8 50%, #9dd2f8 75%, #4a8ed8); }
    button { all: unset; box-sizing: border-box; height: 16px; display: grid; place-items: center; border-bottom: 1px solid #c4c4c4; background: linear-gradient(90deg, #ddd, #fff 60%, #eee); }
    svg { display: block; }
    .grip { height: 15px; background: #fff; }
  `;
  render() {
    return html`
      <div class="track"><div class="thumb"></div></div>
      <button aria-label="Scroll up"><svg width="7" height="6" viewBox="0 0 7 6"><path d="M3.500 0 7 6H0z" fill="#444"/></svg></button>
      <button aria-label="Scroll down"><svg width="7" height="6" viewBox="0 0 7 6"><path d="M3.500 6 7 0H0z" fill="#444"/></svg></button>
      <div class="grip"><svg width="15" height="15" viewBox="0 0 15 15"><path d="M4 14 14 4M7 14l7-7M10 14l4-4" stroke="#777"/></svg></div>`;
  }
}

@customElement("dock-icon")
class DockIcon extends LitElement {
  @property({ attribute: false }) item!: DockItem;
  static styles = css`
    :host { display: grid; justify-items: center; align-content: start; position: relative; }
    button { all: unset; display: block; }
    svg { display: block; overflow: visible; -webkit-box-reflect: below 1px linear-gradient(transparent 55%, rgba(0,0,0,.3)); }
    .badge { position: absolute; left: 50%; top: 0; margin-left: 6px; width: 14px; height: 14px; border-radius: 50%; background: #e3250e; color: #fff; font: bold 9px/14px "Liberation Sans", sans-serif; text-align: center; box-shadow: 0 0 2px #400; }
    .lamp { position: absolute; bottom: -14px; left: 50%; margin-left: -9px; width: 18px; height: 10px; border-radius: 50%; background: radial-gradient(closest-side, #fff 20%, #9ad4ff 50%, rgba(120,190,255,0)); }
  `;
  render() {
    const i = this.item;
    return html`<button aria-label=${i.name}><svg width="40" height="40" viewBox="0 0 40 40">${i.art}</svg></button>
      ${i.badge ? html`<span class="badge">${i.badge}</span>` : nothing}
      ${i.running ? html`<span class="lamp"></span>` : nothing}`;
  }
}

@customElement("app-dock")
class AppDock extends LitElement {
  static styles = css`
    :host { display: flex; position: relative; height: 67px; box-sizing: border-box; padding: 10px 37px 0 42px; overflow: hidden; }
    .shelf { position: absolute; inset: 30px 18px 0 18px; clip-path: polygon(21px 0, calc(100% - 20px) 0, 100% 100%, 0 100%); background: linear-gradient(#68626c, #77727b 13px, #8b8790 14px, #8d8a91 28px); }
    .lip { position: absolute; inset: auto 18px 0 18px; height: 9px; background: linear-gradient(#c4c4c6 6px, #777 6px, #777 7px, #f4f4f4 7px); }
    dock-icon { flex: 1; height: 40px; min-width: 0; }
    .rule { position: relative; flex: 0 0 24px; display: grid; justify-items: center; align-content: start; gap: 3px; padding-top: 22px; }
    .rule i { height: 2px; width: 9px; background: #a9a6ad; }
    .rule i:nth-child(n + 3) { width: 12px; }
  `;
  render() {
    return html`<div class="shelf"></div><div class="lip"></div>
      ${dock.map((i) => html`<dock-icon .item=${i}></dock-icon>`)}
      <div class="rule"><i></i><i></i><i></i><i></i><i></i></div>
      ${dockRight.map((i) => html`<dock-icon .item=${i}></dock-icon>`)}`;
  }
}

@customElement("app-root")
class AppRoot extends LitElement {
  static styles = css`
    :host { display: grid; grid-template-rows: auto minmax(0, 1fr) auto; height: 100vh; overflow: hidden;
      background:
        radial-gradient(circle at 14px 741px, #99a 0 1px, transparent 2px), radial-gradient(circle at 24px 770px, #778 0 1px, transparent 2px), radial-gradient(circle at 1273px 264px, #aaa 0 1px, transparent 2px),
        radial-gradient(circle at 136px 738px, #778 0 1px, transparent 2px), radial-gradient(circle at 1275px 52px, #669 0 1px, transparent 2px), radial-gradient(circle at 1275px 600px, #446 0 1px, transparent 2px),
        linear-gradient(90deg, #08061c, #2b0a33 18%, #340f3a 50%, #0a0719 68%, #05030f 96%, transparent 99%),
        linear-gradient(#14061f, #2b0a33 20%, #300a30 40%, #0c0620 65%, #04030c); }
    .window { display: grid; grid-template-rows: auto minmax(0, 1fr); margin-right: 13px; min-height: 0; }
    .page { display: grid; grid-template-columns: minmax(0, 1fr) 15px; min-height: 0; }
  `;
  render() {
    return html`
      <menu-bar></menu-bar>
      <div class="window">
        <browser-chrome></browser-chrome>
        <div class="page"><message-thread></message-thread><scroll-rail></scroll-rail></div>
      </div>
      <app-dock></app-dock>`;
  }
}
